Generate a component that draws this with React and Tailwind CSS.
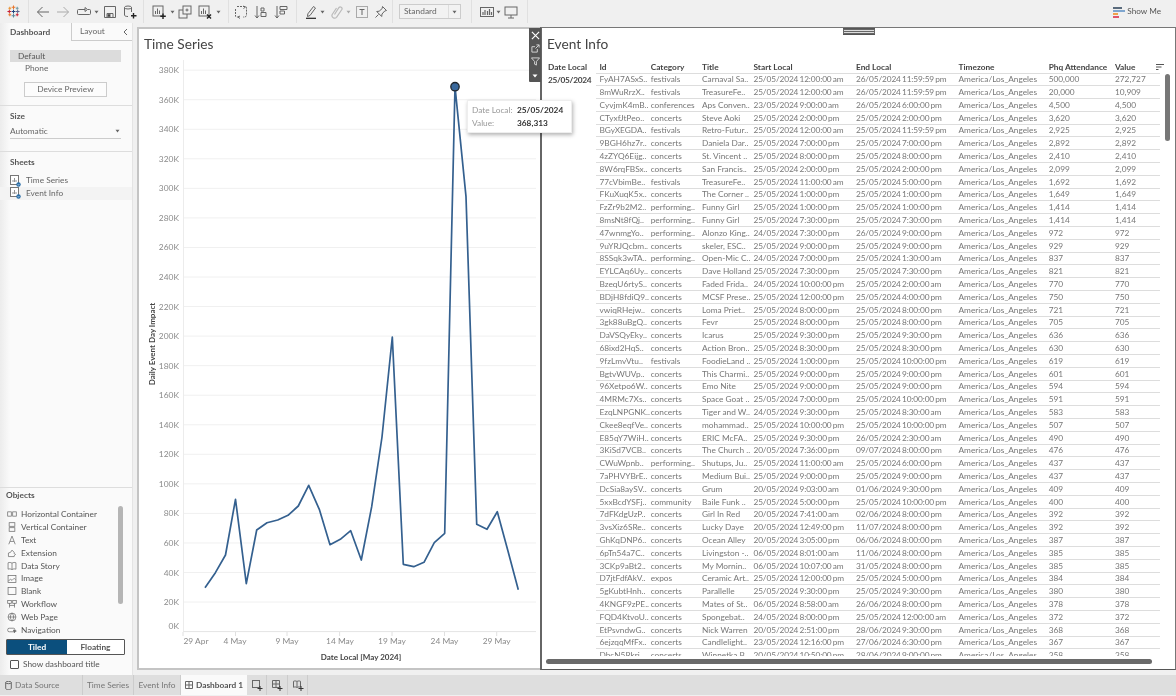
import React from "react";

const RAW = `FyAH7ASxS..|festivals|Carnaval Sa..|25/05/2024 12:00:00 am|26/05/2024 11:59:59 pm|500,000|272,727
8mWuRrzX..|festivals|TreasureFe..|25/05/2024 12:00:00 am|26/05/2024 11:59:59 pm|20,000|10,909
CyvjmK4mB..|conferences|Aps Conven..|23/05/2024 9:00:00 am|26/05/2024 6:00:00 pm|4,500|4,500
CTyxfJtPeo..|concerts|Steve Aoki|25/05/2024 2:00:00 pm|25/05/2024 2:00:00 pm|3,620|3,620
BGyXEGDA..|festivals|Retro-Futur..|25/05/2024 12:00:00 am|25/05/2024 11:59:59 pm|2,925|2,925
9BGH6hz7r..|concerts|Daniela Dar..|25/05/2024 7:00:00 pm|25/05/2024 7:00:00 pm|2,892|2,892
4zZYQ6Eijg..|concerts|St. Vincent ..|25/05/2024 8:00:00 pm|25/05/2024 8:00:00 pm|2,410|2,410
8W6rqFBSx..|concerts|San Francis..|25/05/2024 2:00:00 pm|25/05/2024 2:00:00 pm|2,099|2,099
77cVbimBe..|festivals|TreasureFe..|25/05/2024 11:00:00 am|25/05/2024 5:00:00 pm|1,692|1,692
FKuXuqK5x..|concerts|The Corner ..|25/05/2024 1:00:00 pm|25/05/2024 1:00:00 pm|1,649|1,649
FzZr9b2M2..|performing..|Funny Girl|25/05/2024 1:00:00 pm|25/05/2024 1:00:00 pm|1,414|1,414
8msNt8fQj..|performing..|Funny Girl|25/05/2024 7:30:00 pm|25/05/2024 7:30:00 pm|1,414|1,414
47wnmgYo..|performing..|Alonzo King..|24/05/2024 7:30:00 pm|26/05/2024 9:00:00 pm|972|972
9uYRJQcbm..|concerts|skeler, ESC..|25/05/2024 9:00:00 pm|25/05/2024 9:00:00 pm|929|929
8SSqk3wTA..|performing..|Open-Mic C..|24/05/2024 7:00:00 pm|25/05/2024 1:30:00 am|837|837
EYLCAq6Uy..|concerts|Dave Holland|25/05/2024 7:30:00 pm|25/05/2024 7:30:00 pm|821|821
BzeqU6rtyS..|concerts|Faded Frida..|24/05/2024 10:00:00 pm|25/05/2024 2:00:00 am|770|770
BDjH8fdiQ9..|concerts|MCSF Prese..|25/05/2024 12:00:00 pm|25/05/2024 4:00:00 pm|750|750
vwiqRHejw..|concerts|Loma Priet..|25/05/2024 8:00:00 pm|25/05/2024 8:00:00 pm|721|721
3gk88uBgQ..|concerts|Fevr|25/05/2024 8:00:00 pm|25/05/2024 8:00:00 pm|705|705
DaVSQyEky..|concerts|Icarus|25/05/2024 9:30:00 pm|25/05/2024 9:30:00 pm|636|636
68ixd2HqS..|concerts|Action Bron..|25/05/2024 8:30:00 pm|25/05/2024 8:30:00 pm|630|630
9fzLmvVtu..|festivals|FoodieLand ..|25/05/2024 1:00:00 pm|25/05/2024 10:00:00 pm|619|619
BgtvWUVp..|concerts|This Charmi..|25/05/2024 9:00:00 pm|25/05/2024 9:00:00 pm|601|601
96Xetpo6W..|concerts|Emo Nite|25/05/2024 9:00:00 pm|25/05/2024 9:00:00 pm|594|594
4MRMc7Xs..|concerts|Space Goat ..|25/05/2024 7:00:00 pm|25/05/2024 10:00:00 pm|591|591
EzqLNPGNK..|concerts|Tiger and W..|24/05/2024 9:30:00 pm|25/05/2024 8:30:00 am|583|583
Ckee8eqfVe..|concerts|mohammad..|25/05/2024 10:00:00 pm|25/05/2024 10:00:00 pm|507|507
E85qY7WiH..|concerts|ERIC McFA..|25/05/2024 9:30:00 pm|26/05/2024 2:30:00 am|490|490
3KiSd7VCB..|concerts|The Church ..|20/05/2024 7:36:00 pm|09/07/2024 8:00:00 pm|476|476
CWuWpnb..|performing..|Shutups, Ju..|25/05/2024 11:00:00 am|25/05/2024 6:00:00 pm|437|437
7aPHVYBrE..|concerts|Medium Bui..|25/05/2024 9:00:00 pm|25/05/2024 9:00:00 pm|437|437
DcSia8aySV..|concerts|Grum|20/05/2024 9:03:00 am|01/06/2024 9:30:00 pm|409|409
5xxBcdYSFj..|community|Baile Funk ..|25/05/2024 5:00:00 pm|25/05/2024 10:00:00 pm|400|400
7dFKdgUzP..|concerts|Girl In Red|20/05/2024 7:41:00 am|02/06/2024 8:00:00 pm|392|392
3vsXiz6SRe..|concerts|Lucky Daye|20/05/2024 12:49:00 pm|11/07/2024 8:00:00 pm|392|392
GhKqDNP6..|concerts|Ocean Alley|20/05/2024 3:05:00 pm|06/06/2024 8:00:00 pm|387|387
6pTn54a7C..|concerts|Livingston -..|06/05/2024 8:01:00 am|11/06/2024 8:00:00 pm|385|385
3CKp9aBt2..|concerts|My Mornin..|06/05/2024 10:07:00 am|31/05/2024 8:00:00 pm|385|385
D7jtFdfAkV..|expos|Ceramic Art..|25/05/2024 12:00:00 pm|25/05/2024 5:00:00 pm|384|384
5gKubtHnh..|concerts|Parallelle|25/05/2024 9:30:00 pm|25/05/2024 9:30:00 pm|380|380
4KNGF9zPE..|concerts|Mates of St..|06/05/2024 8:58:00 am|26/06/2024 8:00:00 pm|378|378
FQD4KtvoU..|concerts|Spongebat..|24/05/2024 8:00:00 pm|25/05/2024 12:00:00 am|372|372
EtPsvndwG..|concerts|Nick Warren|20/05/2024 2:51:00 pm|28/06/2024 9:30:00 pm|368|368
6ejzqqMfFx..|concerts|Candlelight..|23/05/2024 12:16:00 pm|27/06/2024 6:30:00 pm|367|367
DhcN5Rkri..|concerts|Winnetka B..|20/05/2024 10:50:00 pm|28/06/2024 9:00:00 pm|358|358`;
const ROWS = RAW.split("\n").map((l) => l.split("|"));

const COLS = "grid grid-cols-[51.2px_51.3px_51.5px_102.5px_102.5px_90.2px_66.3px_46px]";
const DATE = "whitespace-nowrap tracking-[-0.12px] [word-spacing:-0.8px]";

const Ic = ({ className = "", children, vb = "0 0 14 14" }) => (
  <svg viewBox={vb} fill="none" stroke="currentColor" strokeWidth="1" className={"shrink-0 text-[#666] " + className}>
    {children}
  </svg>
);
const Caret = ({ className = "" }) => (
  <svg viewBox="0 0 5 4" className={"w-[5px] h-[4px] shrink-0 " + className}>
    <path d="M0.5 0.8h4L2.5 3.4z" fill="#666" />
  </svg>
);
const Sep = ({ className = "" }) => <div className={"w-px h-[23px] bg-[#e0e0e0] shrink-0 " + className} />;

const Logo = () => (
  <svg viewBox="0 0 14 14" className="w-[13px] h-[13px] ml-[7px] mr-px shrink-0" strokeWidth="1.1">
    <path d="M7 .5v4M5 2.5h4" stroke="#e8762c" />
    <path d="M7 9.5v4M5 11.5h4" stroke="#59879b" />
    <path d="M.5 7h4M2.5 5v4" stroke="#c72035" />
    <path d="M9.5 7h4M11.5 5v4" stroke="#5b6591" />
    <path d="M7 5v4M5 7h4" stroke="#1f457e" />
    <path d="M3 2v3M1.5 3.5h3" stroke="#eb912b" />
    <path d="M11 2v3M9.5 3.5h3" stroke="#7099a6" />
    <path d="M3 9v3M1.5 10.5h3" stroke="#e8762c" />
    <path d="M11 9v3M9.5 10.5h3" stroke="#c72035" />
  </svg>
);

const SheetIc = () => (
  <svg viewBox="0 0 11 12" className="w-[11px] h-[12px] shrink-0" fill="none">
    <rect x=".5" y=".5" width="8" height="9" stroke="#777" fill="#fff" />
    <path d="M3 7V5M4.5 7V3M6 7V5" stroke="#777" strokeWidth=".8" />
    <circle cx="8.5" cy="9.5" r="2.2" fill="#2a6ea8" />
    <path d="M7.6 9.5l.7.7 1.1-1.2" stroke="#fff" strokeWidth=".6" />
  </svg>
);

const OBJECTS = [
  ["Horizontal Container", <><rect x="1" y="4" width="5" height="6" /><rect x="8" y="4" width="5" height="6" /></>],
  ["Vertical Container", <><rect x="3" y="1" width="8" height="5" /><rect x="3" y="8" width="8" height="5" /></>],
  ["Text", <path d="M2.5 13L7 1.5 11.5 13M4.3 9h5.4" />],
  ["Extension", <path d="M2 12V7l3-1 2-3 3 3v2l2 1-2 2v1z" />],
  ["Data Story", <path d="M7 3C5 1.8 3 1.8 1.5 2.5v9C3 10.8 5 10.8 7 12c2-1.2 4-1.2 5.5-.5v-9C11 1.8 9 1.8 7 3zM7 3v9" />],
  ["Image", <><rect x="1.5" y="2" width="11" height="10" /><path d="M2 10l3-3 2 2 3-3 2 2" /></>],
  ["Blank", <rect x="1.5" y="2" width="11" height="10" />],
  ["Workflow", <><rect x="1" y="2" width="5" height="4" /><rect x="8" y="2" width="5" height="4" /><path d="M3.5 6v6M10.5 6v6M3.5 9h7" /></>],
  ["Web Page", <><circle cx="7" cy="7" r="5.5" /><path d="M1.5 7h11M7 1.5c-3 3.5-3 7.5 0 11M7 1.5c3 3.5 3 7.5 0 11" /></>],
  ["Navigation", <><rect x="1" y="4.5" width="10" height="5" rx="2" /><path d="M9 7l4 1.5-2 .5-.5 2z" fill="#666" /></>],
];

const DATA = [
  [205, 587.7], [215.4, 572.7], [225.5, 555], [235.5, 499.3], [246.3, 583.7], [256.7, 530], [267, 522.7], [277.7, 520],
  [288, 515.3], [298.3, 506], [308.7, 485.3], [319.3, 509.3], [330, 544.7], [340.3, 539.3], [350.7, 530.7], [361.3, 560],
  [371.7, 506.7], [382, 437], [392.3, 337], [403.3, 564.3], [413.7, 566.7], [424, 562.3], [434.3, 542.7], [444.7, 533.3],
  [455, 86.7], [466, 196.7], [476.7, 524.3], [487, 529.3], [497.3, 511.7], [507.7, 550], [518.3, 589.7],
];
const YT = [380, 360, 340, 320, 300, 280, 260, 240, 220, 200, 180, 160, 140, 120, 100, 80, 60, 40, 20, 0];
const XT = [["29 Apr", 183, 196], ["4 May", 235.5, 235], ["9 May", 287, 287], ["14 May", 339.6, 340], ["19 May", 392, 392], ["24 May", 444.5, 444.5], ["29 May", 496.7, 496.7]];

function Chart() {
  return (
    <svg viewBox="139 56 400 612" className="w-[400px] h-[612px] block">
      {YT.map((v) => {
        const y = 631.6 - v * 1.4775;
        return (
          <g key={v}>
            {v > 0 && <line x1="183.5" x2="536" y1={y} y2={y} stroke="#f0f0f0" />}
            <text x="179" y={(v === 0 ? 626 : y) + 3} textAnchor="end" fontSize="8.4" fill="#8a8a8a">{v}K</text>
          </g>
        );
      })}
      <line x1="183.5" x2="183.5" y1="60" y2="632" stroke="#ececec" />
      <line x1="183.5" x2="536" y1="631.6" y2="631.6" stroke="#e4e4e4" />
      {XT.map(([l, t, c]) => (
        <g key={l}>
          <line x1={t} x2={t} y1="632" y2="636" stroke="#e0e0e0" />
          <text x={c} y="644" textAnchor="middle" fontSize="8.4" fill="#8a8a8a">{l}</text>
        </g>
      ))}
      <polyline points={DATA.map((p) => p.join(",")).join(" ")} fill="none" stroke="#34608f" strokeWidth="1.7" strokeLinejoin="round" />
      <circle cx="455" cy="86.7" r="4.2" fill="#39689c" stroke="#20262c" strokeWidth="1.3" />
      <text x="361" y="660" textAnchor="middle" fontSize="8" fontWeight="700" fill="#444">Date Local [May 2024]</text>
      <text transform="translate(155 344) rotate(-90)" textAnchor="middle" fontSize="8" fontWeight="700" fill="#444">Daily Event Day Impact</text>
    </svg>
  );
}

export default function App() {
  return (
    <div className="w-[1176px] h-[696px] overflow-hidden flex flex-col bg-[#f0f0f0] text-[#555] font-['Lato',sans-serif] text-[8.3px] leading-none blur-[0.35px]">
      {/* toolbar */}
      <div className="h-[23px] shrink-0 flex items-center">
        <Logo />
        <Sep className="ml-[7px]" />
        <Ic className="w-[14px] h-[14px] ml-[7px]"><path d="M13 7H1.5M6.5 2L1.5 7l5 5" /></Ic>
        <Ic className="w-[14px] h-[14px] ml-[6px] text-[#aaa]"><path d="M1 7h11.5M7.5 2l5 5-5 5" /></Ic>
        <Ic className="w-[14px] h-[14px] ml-[7px]"><path d="M11 4.5h1.5a1 1 0 011 1v3a1 1 0 01-1 1h-11a1 1 0 01-1-1v-3a1 1 0 011-1H8M8 2.5v4l2.5-2z" /></Ic>
        <Caret className="ml-[3px]" />
        <Ic className="w-[14px] h-[14px] ml-[4px]"><path d="M1.5 1.5h11v11h-11zM4 12.5v-4h6v4" /><rect x="5" y="9.5" width="2" height="2" fill="#444" /></Ic>
        <Ic className="w-[14px] h-[14px] ml-[6px]"><ellipse cx="5" cy="2.5" rx="3.5" ry="1.5" /><path d="M1.5 2.5V10c0 1 1.5 1.5 3.5 1.5M8.5 2.5V7" /><path d="M10.5 8v5.5M8 10.7h5.5" stroke="#222" strokeWidth="1.4" /></Ic>
        <Sep className="ml-[6px]" />
        <Ic className="w-[14px] h-[14px] ml-[8px]"><rect x="1" y="1" width="10" height="10" /><path d="M3.5 9V6M5.5 9V3.5M7.5 9V5.5" /><path d="M11 8.5v5.5M8.3 11.2h5.5" stroke="#222" strokeWidth="1.4" /></Ic>
        <Caret className="ml-[4px]" />
        <Ic className="w-[14px] h-[14px] ml-[3px]"><rect x="1" y="5" width="8" height="8" /><rect x="5" y="1" width="8" height="8" fill="#f0f0f0" /><path d="M9 3.5v3M7.5 5h3" /></Ic>
        <Ic className="w-[14px] h-[14px] ml-[6px]"><rect x="1" y="1" width="10" height="10" /><path d="M3.5 9V6M5.5 9V3.5M7.5 9V5.5" /><path d="M9 9.5l4 4M13 9.5l-4 4" stroke="#222" strokeWidth="1.4" /></Ic>
        <Caret className="ml-[4px]" />
        <Sep className="ml-[7px]" />
        <Ic className="w-[14px] h-[14px] ml-[5px]"><path d="M3 1.5h8.5a1 1 0 011 1V10a2 2 0 01-2 2H9M1.5 4v7a1 1 0 001 1H6" strokeDasharray="2 1" /><path d="M9.5 1l2 1-2 1.5M6 11l-2 1 2 1.5" /></Ic>
        <Ic className="w-[14px] h-[14px] ml-[6px]"><path d="M3 1v12M1 10.5L3 13l2-2.5" /><path d="M7 3h3v3H7zM7 7.5h5v4H7z" /></Ic>
        <Ic className="w-[14px] h-[14px] ml-[6px]"><path d="M3 1v12M1 10.5L3 13l2-2.5" /><path d="M6 1.5h7v3H6zM6 6h4.5v3H6z" /></Ic>
        <Sep className="ml-[8px]" />
        <Ic className="w-[14px] h-[14px] ml-[7px]"><path d="M9.5 1.5l2 1.5L6 10.5 3.5 11.5l.3-2.6z" /><path d="M2 13.3h10" stroke="#222" strokeWidth="1.2" /></Ic>
        <Caret className="ml-[2px]" />
        <Ic className="w-[14px] h-[14px] ml-[5px] text-[#bbb]"><path d="M4.5 9.5l4.5-7a1.8 1.8 0 013 1.8l-5.5 8a2.6 2.6 0 01-4.3-2.8L6.5 3" strokeWidth="1.2" /></Ic>
        <Caret className="ml-[2px] opacity-50" />
        <Ic className="w-[14px] h-[14px] ml-[4px] text-[#aaa]"><rect x="1.5" y="1.5" width="11" height="11" /><path d="M4.5 4.5h5M7 4.5v5.5" stroke="#666" /></Ic>
        <Ic className="w-[14px] h-[14px] ml-[5px]"><path d="M8.5 1.5l4 4-1.8.5-2.7 3-.3 2.5-5-5 2.5-.3 3-2.7zM4.5 9.5L1.5 12.5" /></Ic>
        <Sep className="ml-[4px]" />
        <div className="ml-[6px] w-[62px] h-[15px] shrink-0 flex items-center border border-[#ccc] bg-[#f2f2f2] text-[8.4px] text-[#666]">
          <span className="pl-[4px] flex-1">Standard</span>
          <span className="w-[12px] h-full border-l border-[#ddd] flex items-center justify-center"><Caret /></span>
        </div>
        <Sep className="ml-[10px]" />
        <Ic className="w-[14px] h-[14px] ml-[8px]"><rect x=".5" y="2.5" width="13" height="9" /><path d="M3 10V7M5 10V5M7.5 10V6M9.5 10V4M11.5 10V7" strokeWidth="1.2" /></Ic>
        <Caret className="ml-[2px]" />
        <Ic className="w-[14px] h-[14px] ml-[3px]"><rect x="1" y="2" width="12" height="8" /><path d="M7 10v3M4 13h6" /></Ic>
        <Sep className="ml-[9px]" />
        <div className="ml-auto pr-[15px] flex items-center gap-[2px] text-[8.2px] text-[#555]">
          <svg viewBox="0 0 12 12" className="w-[12px] h-[12px]">
            <rect x="0" y="1" width="9" height="2" fill="#5a6b7d" />
            <rect x="0" y="4" width="12" height="2" fill="#7fa6cf" />
            <rect x="0" y="7" width="5" height="2" fill="#f0a04b" />
            <rect x="0" y="10" width="6" height="2" fill="#e0556b" />
          </svg>
          <span>Show Me</span>
        </div>
      </div>

      {/* body */}
      <div className="flex-1 min-h-0 flex">
        {/* sidebar */}
        <aside className="w-[133px] shrink-0 flex flex-col bg-[linear-gradient(90deg,#ececec,#fafafa_10px)] border-r border-[#e4e4e4]">
          <div className="h-[18px] shrink-0 flex">
            <div className="w-[72px] pl-[10px] flex items-center font-bold border-r border-[#ccc]">Dashboard</div>
            <div className="flex-1 flex items-center pl-[8px] pr-[4px] justify-between border-b border-[#ccc] text-[#666]">
              <span>Layout</span>
              <svg viewBox="0 0 5 8" className="w-[5px] h-[8px]" fill="none" stroke="#666"><path d="M4 1L1 4l3 3" /></svg>
            </div>
          </div>
          <div className="ml-[10px] mt-[9px] w-[111px] h-[12px] bg-[#dcdcdc] flex items-center pl-[8px] text-[#555]">Default</div>
          <div className="ml-[25px] h-[12px] flex items-center text-[#666]">Phone</div>
          <div className="ml-[24px] mt-[8px] w-[83px] h-[15px] border border-[#ccc] bg-[#fcfcfc] flex items-center justify-center text-[#666]">Device Preview</div>
          <div className="mt-[8px] border-t border-[#ddd] pl-[10px] pt-[6px] h-[46px] shrink-0">
            <div className="font-bold">Size</div>
            <div className="mt-[6px] w-[111px] h-[13px] border-b border-[#ccc] flex items-center justify-between text-[#666] pb-[2px] pr-[1px]">
              <span>Automatic</span><Caret />
            </div>
          </div>
          <div className="border-t border-[#ddd] pt-[6px]">
            <div className="pl-[10px] font-bold">Sheets</div>
            <div className="mt-[8px] pl-[10px] h-[12.5px] flex items-center gap-[5px] text-[#666]"><SheetIc />Time Series</div>
            <div className="pl-[10px] h-[13px] flex items-center gap-[5px] bg-[#f3f3f3] text-[#666]"><SheetIc />Event Info</div>
          </div>
          <div className="mt-auto border-t border-[#ddd] pb-[6px]">
            <div className="pl-[6px] pt-[3px] font-bold">Objects</div>
            <div className="relative mt-[9px] h-[131px]">
              {OBJECTS.map(([t, p]) => (
                <div key={t} className="h-[12.85px] pl-[7px] flex items-center gap-[4px] text-[#555]">
                  <Ic className="w-[10px] h-[10px]">{p}</Ic>
                  <span>{t}</span>
                </div>
              ))}
              <div className="absolute left-[118px] top-[-2px] w-[5px] h-[98px] rounded-full bg-[#b5b5b5]" />
            </div>
            <div className="ml-[6px] w-[119px] h-[16px] flex border border-[#555] rounded-[1px] font-bold">
              <div className="w-[60px] bg-[#0b4f7d] text-white flex items-center justify-center">Tiled</div>
              <div className="flex-1 bg-white text-[#555] flex items-center justify-center">Floating</div>
            </div>
            <div className="ml-[10px] mt-[5px] flex items-center gap-[4px] text-[#555]">
              <span className="w-[9px] h-[9px] border border-[#555] rounded-[1px] bg-white" />
              Show dashboard title
            </div>
          </div>
        </aside>

        {/* dashboard */}
        <main className="flex-1 min-w-0 flex pl-[4px] pt-[4px] pb-[5px]">
          <section className="relative z-10 w-[403px] shrink-0 bg-white border-2 border-[#c4c4c4] border-r-0">
            <h2 className="pl-[5px] pt-[8px] h-[27px] text-[13.7px] font-normal text-[#444] leading-none">Time Series</h2>
            <Chart />
            <div className="absolute left-[328px] top-[71px] w-[105px] h-[33px] bg-white shadow-[1px_2px_4px_rgba(0,0,0,0.3)] border border-[#eee] grid grid-cols-[45px_1fr] content-center gap-y-[4px] pl-[4px] text-[#999]">
              <span>Date Local:</span><span className="font-bold text-[#333]">25/05/2024</span>
              <span>Value:</span><span className="font-bold text-[#333]">368,313</span>
            </div>
            <div className="absolute -right-[1px] -top-[1px] w-[12px] h-[54px] bg-[#555] flex flex-col items-center pt-[3px] gap-[4px] rounded-bl-[1px]">
              <Ic className="w-[9px] h-[9px] text-white" vb="0 0 10 10"><path d="M1 1l8 8M9 1L1 9" strokeWidth="1.3" /></Ic>
              <Ic className="w-[9px] h-[9px] text-[#ddd]" vb="0 0 10 10"><path d="M7 5.5V9H1V3h3.5M5 5l4-4M6 1h3v3" /></Ic>
              <Ic className="w-[9px] h-[9px] text-[#ddd]" vb="0 0 10 10"><path d="M.5 1h9L6 5v4L4 8V5z" /></Ic>
              <svg viewBox="0 0 6 4" className="w-[6px] h-[4px] mt-[4px]"><path d="M.5.5h5L3 3.5z" fill="#fff" /></svg>
            </div>
          </section>

          <section className="relative flex-1 min-w-0 bg-white border-2 border-t border-r border-b border-l-[#666] border-t-[#777] border-r-[#777] border-b-[#555] flex flex-col">
            <div className="absolute left-[301px] top-0 w-[32px] h-[7px] bg-[#666] border-y border-[#555] flex flex-col justify-center gap-px px-px">
              <div className="h-px bg-[#ddd]" /><div className="h-px bg-[#ddd]" />
            </div>
            <h2 className="pl-[5px] pt-[9px] h-[33px] shrink-0 text-[13.7px] font-normal text-[#444] leading-none">Event Info</h2>
            <div className="flex-1 min-h-0 relative pl-[5px]">
              <div className="flex h-[11.5px] items-center font-bold text-[#444]">
                <div className="w-[49px] shrink-0 pl-px">Date Local</div>
                <div className={COLS + " flex-1 pl-[3.5px] mr-[13px]"}>
                  {["Id", "Category", "Title", "Start Local", "End Local", "Timezone", "Phq Attendance", "Value"].map((h) => (
                    <div key={h} className="whitespace-nowrap">{h}</div>
                  ))}
                </div>
              </div>
              <div className="flex h-[583px] overflow-hidden">
                <div className="w-[49px] shrink-0 pl-px pt-[3px] font-bold text-[#444] tracking-[-0.3px]">25/05/2024</div>
                <div className="w-[564px] shrink-0 border-t border-[#ddd]">
                  {ROWS.map((r) => (
                    <div key={r[0]} className={COLS + " h-[12.8px] items-center pl-[3.5px] border-b border-[#ddd] text-[#777]"}>
                      <div className="whitespace-nowrap">{r[0]}</div>
                      <div className="whitespace-nowrap">{r[1]}</div>
                      <div className="whitespace-nowrap">{r[2]}</div>
                      <div className={DATE}>{r[3]}</div>
                      <div className={DATE}>{r[4]}</div>
                      <div className="whitespace-nowrap">America/Los_Angeles</div>
                      <div className="whitespace-nowrap">{r[5]}</div>
                      <div className="whitespace-nowrap">{r[6]}</div>
                    </div>
                  ))}
                </div>
              </div>
              <svg viewBox="0 0 8 6" className="absolute left-[614px] top-[3px] w-[8px] h-[6px]" stroke="#555" strokeWidth="1"><path d="M0 .5h8M0 3h5.5M0 5.5h2.5" /></svg>
              <div className="absolute left-[623px] top-[13px] w-[5px] h-[67px] rounded-full bg-[#777]" />
              <div className="absolute left-[4px] right-[23px] bottom-[5px] h-[5px] rounded-full bg-[#6a6a6a]" />
            </div>
          </section>
        </main>
      </div>

      {/* tabs */}
      <div className="h-[20px] shrink-0 flex items-stretch bg-[#dedede] text-[#777] mb-px">
        <div className="w-[83px] flex items-center pl-[5px] gap-[3px] border-r border-[#ccc]">
          <Ic className="w-[7px] h-[9px]" vb="0 0 7 9"><ellipse cx="3.5" cy="1.5" rx="2.8" ry="1.2" /><path d="M.7 1.5v6c0 .7 1.3 1.2 2.8 1.2s2.8-.5 2.8-1.2v-6" /></Ic>
          Data Source
        </div>
        <div className="w-[51px] flex items-center justify-center border-r border-[#ccc]">Time Series</div>
        <div className="w-[47px] flex items-center justify-center border-r border-[#ccc]">Event Info</div>
        <div className="w-[66px] flex items-center justify-center gap-[3px] bg-[#fafafa] text-[#555] font-bold">
          <Ic className="w-[8px] h-[8px]" vb="0 0 8 8"><path d="M.5.5h7v7h-7zM.5 4h7M4 .5v7" /></Ic>
          Dashboard 1
        </div>
        <div className="w-[20px] flex items-center justify-center pl-px border-r border-[#ccc]">
          <Ic className="w-[11px] h-[11px]" vb="0 0 11 11"><rect x=".5" y=".5" width="7" height="7" /><path d="M8 6v5M5.5 8.5h5" stroke="#333" /></Ic>
        </div>
        <div className="w-[21px] flex items-center justify-center pl-px border-r border-[#ccc]">
          <Ic className="w-[11px] h-[11px]" vb="0 0 11 11"><path d="M.5.5h7v7h-7zM.5 4h7M4 .5v7" /><path d="M8 6v5M5.5 8.5h5" stroke="#333" /></Ic>
        </div>
        <div className="w-[20px] flex items-center justify-center pl-px border-r border-[#ccc]">
          <Ic className="w-[11px] h-[11px]" vb="0 0 11 11"><path d="M4 1.5C3 .8 1.5.8.5 1.3v6C1.5 6.8 3 6.8 4 7.5c1-.7 2.5-.7 3.5-.2v-6C6.5.8 5 .8 4 1.5zM4 1.5v6" /><path d="M8 6v5M5.5 8.5h5" stroke="#333" /></Ic>
        </div>
      </div>
    </div>
  );
}
